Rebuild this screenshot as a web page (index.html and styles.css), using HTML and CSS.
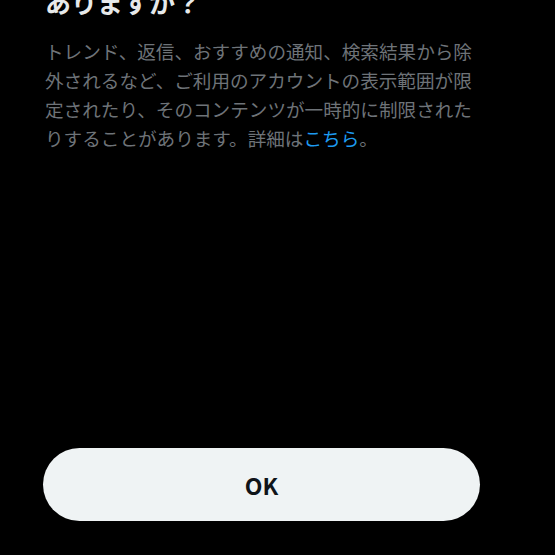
FILE: index.html
```html
<!DOCTYPE html>
<html lang="ja">
<head>
    <meta charset="UTF-8">
    <meta name="viewport" content="width=device-width, initial-scale=1.0">
    <title>アカウントの表示範囲</title>
    <link rel="stylesheet" href="styles.css">
</head>
<body>

    <div class="sheet">
        <div class="content">
            <h1 class="title">ありますか？</h1>
            <p class="desc">トレンド、返信、おすすめの通知、検索結果から除外されるなど、ご利用のアカウントの表示範囲が限定されたり、そのコンテンツが一時的に制限されたりすることがあります。詳細は<a class="link" href="#">こちら</a>。</p>
        </div>
        <button class="ok">OK</button>
    </div>

</body>
</html>
```

FILE: styles.css
```css
body {
    margin: 0;
    background-color: #000;
    font-family: "Noto Sans CJK JP", "Noto Sans", sans-serif;
}
.sheet {
    display: flex;
    flex-direction: column;
    height: 100vh;
    box-sizing: border-box;
    padding: 0 74px 34px 45px;
}
.content {
    margin-top: -14px;
}
.title {
    margin: 0;
    color: #e7e9ea;
    font-size: 26px;
    line-height: 32px;
    font-weight: 700;
}
.desc {
    margin: 18px 0 0;
    color: #6e7378;
    font-size: 18.6px;
    line-height: 29px;
}
.link {
    color: #1d9bf0;
    text-decoration: none;
}
.ok {
    margin-top: auto;
    margin-left: -2px;
    width: 437px;
    height: 73px;
    border: none;
    border-radius: 37px;
    background-color: #eff3f4;
    color: #0f1419;
    font-family: "Noto Sans CJK JP", "Noto Sans", sans-serif;
    font-size: 23px;
    font-weight: 700;
    cursor: pointer;
}
```
